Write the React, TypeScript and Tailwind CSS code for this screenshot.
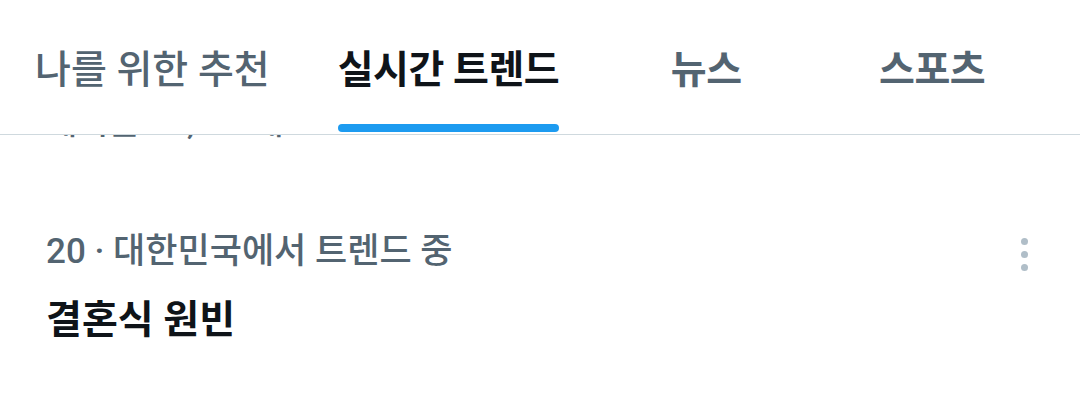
import { useState } from "react";

const tabs = ["나를 위한 추천", "실시간 트렌드", "뉴스", "스포츠"];

export default function App() {
  const [active, setActive] = useState(1);

  return (
    <main
      className="relative h-[416px] w-[1080px] overflow-hidden bg-white text-[#0f1419]"
      style={{ fontFamily: 'Roboto, "Noto Sans CJK KR", sans-serif' }}
    >
      <header className="flex h-[135px] border-b border-[#cfd9de] bg-white pl-[1px]">
        {tabs.map((tab, i) => {
          const on = i === active;
          return (
            <button
              key={tab}
              type="button"
              onClick={() => setActive(i)}
              className="relative flex min-w-[226px] shrink-0 items-center justify-center px-[34px] pt-[6px]"
            >
              <span
                className={`whitespace-nowrap text-[39px] leading-none ${
                  on
                    ? "font-bold tracking-[-0.5px] text-[#0f1419]"
                    : i === 0
                    ? "font-medium text-[#536471]"
                    : "font-bold tracking-[-0.5px] text-[#536471]"
                }`}
              >
                {tab}
              </span>
              {on && (
                <span className="absolute inset-x-[34px] bottom-[2px] h-2 rounded-full bg-[#1d9bf0]" />
              )}
            </button>
          );
        })}
      </header>

      {/* previous row, scrolled under the tabs */}
      <div className="h-[9px] overflow-hidden px-[46px]">
        <p className="-mt-[30px] whitespace-nowrap text-[34px] font-medium leading-[34px] text-[#536471]">
          게시물 12,345개
        </p>
      </div>

      <section className="flex items-start justify-between pl-[46px] pr-[48px] pt-[88px]">
        <div>
          <p className="whitespace-nowrap text-[35px] font-medium leading-[40px] text-[#536471]">
            20 · 대한민국에서 트렌드 중
          </p>
          <h3 className="mt-[26px] whitespace-nowrap text-[39px] font-bold leading-[44px] text-[#0f1419]">
            결혼식 원빈
          </h3>
        </div>
        <button type="button" className="mt-[2px] flex flex-col items-center gap-[6px] p-1">
          <span className="h-[7px] w-[7px] rounded-full bg-[#b0bec8]" />
          <span className="h-[7px] w-[7px] rounded-full bg-[#b0bec8]" />
          <span className="h-[7px] w-[7px] rounded-full bg-[#b0bec8]" />
        </button>
      </section>
    </main>
  );
}
